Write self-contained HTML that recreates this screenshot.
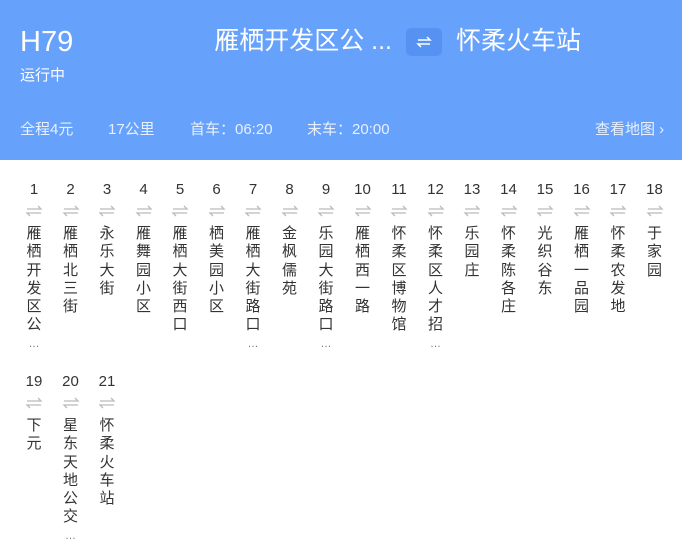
<!DOCTYPE html>
<html><head><meta charset="utf-8"><style>
*{margin:0;padding:0;box-sizing:border-box}
body{width:682px;height:549px;background:#fff;font-family:"Liberation Sans","Noto Sans CJK SC",sans-serif;overflow:hidden;position:relative}
.hd{position:absolute;left:0;top:0;width:682px;height:160px;background:#66a1fc;color:#fff}
.h79{position:absolute;left:20px;top:25px;font-size:29px;line-height:34px}
.st{position:absolute;left:20px;top:66px;font-size:15px;line-height:20px}
.t1{position:absolute;right:290px;top:25px;font-size:25px;line-height:32px;white-space:nowrap}
.sw{position:absolute;left:406px;top:28px;width:36px;height:28px;border-radius:5px;background:#5592f2}
.t2{position:absolute;left:456px;top:25px;font-size:25px;line-height:32px;white-space:nowrap}
.info{position:absolute;top:120px;font-size:15px;line-height:20px;color:#e8f0ff;white-space:nowrap}
.col{position:absolute;width:36px;text-align:center;color:#333}
.n{font-size:15px;line-height:18px;height:20px}
.a{height:20px;display:flex;justify-content:center;align-items:center}
.c{font-size:15px;line-height:18.3px;margin-top:4px;width:16px;margin-left:10px;word-break:break-all}
.d{display:block;color:#777;font-size:11px;line-height:18px}
</style></head><body>
<div class="hd">
<div class="h79">H79</div>
<div class="st">运行中</div>
<div class="t1">雁栖开发区公 ...</div>
<div class="sw"><svg width="36" height="28" viewBox="0 0 36 28"><path d="M12 12h12l-3-3M24 16H12l3 3" stroke="#fff" stroke-width="1.5" fill="none"/></svg></div>
<div class="t2">怀柔火车站</div>
<div class="info" style="left:20px">全程4元</div>
<div class="info" style="left:108px">17公里</div>
<div class="info" style="left:190px">首车：06:20</div>
<div class="info" style="left:307px">末车：20:00</div>
<div class="info" style="left:595px">查看地图 ›</div>
</div>
<div id="s"></div>
<script>
var names=["雁栖开发区公","雁栖北三街","永乐大街","雁舞园小区","雁栖大街西口","栖美园小区","雁栖大街路口","金枫儒苑","乐园大街路口","雁栖西一路","怀柔区博物馆","怀柔区人才招","乐园庄","怀柔陈各庄","光织谷东","雁栖一品园","怀柔农发地","于家园","下元","星东天地公交","怀柔火车站"];
var dots=[0,6,8,11,19];
var h="";
names.forEach(function(n,i){
var r=Math.floor(i/18),k=i%18;
var x=16+k*36.5,y=181+r*192;
h+='<div class="col" style="left:'+x+'px;top:'+y+'px"><div class="n">'+(i+1)+'</div><div class="a"><svg width="18" height="12" viewBox="0 0 18 12"><path d="M2 4h14l-3-3M16 8H2l3 3" stroke="#bbb" stroke-width="1.3" fill="none"/></svg></div><div class="c">'+n+(dots.indexOf(i)>=0?'<span class="d">…</span>':'')+'</div></div>';
});
document.getElementById("s").innerHTML=h;
</script>
</body></html>
